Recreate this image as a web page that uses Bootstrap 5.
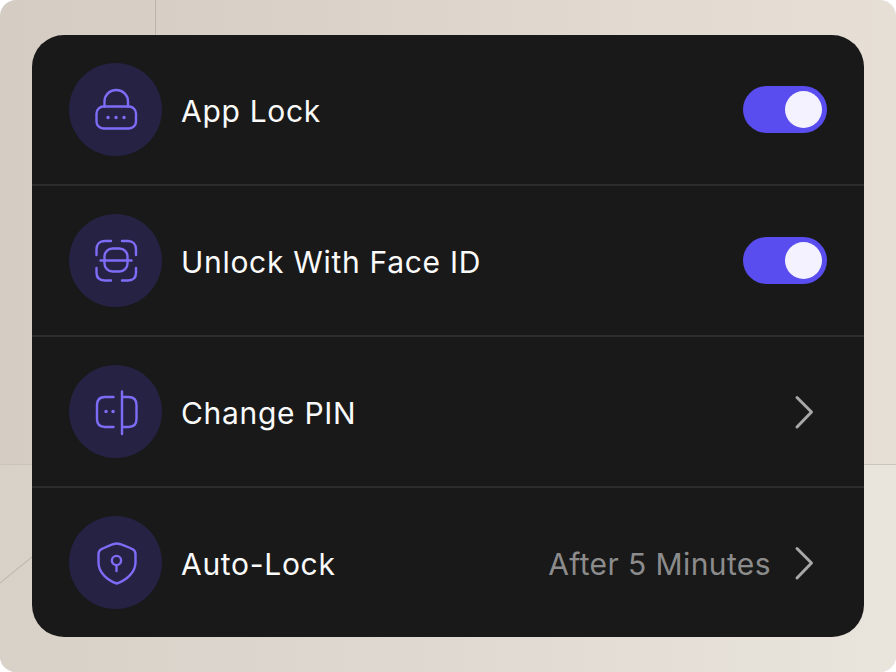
<!DOCTYPE html>
<html lang="en">
<head>
<meta charset="utf-8">
<title>Security settings</title>
<link href="https://cdn.jsdelivr.net/npm/bootstrap@5.3.0/dist/css/bootstrap.min.css" rel="stylesheet">
<style>
html,body{margin:0;width:896px;height:672px;overflow:hidden;background:#fff}
.scene{width:896px;height:672px;border-radius:16px;overflow:hidden;position:relative;padding:35px 32px;
 background:linear-gradient(90deg,#d5cdc3 0%,#d9d1c7 30%,#e2dad0 70%,#e6dfd6 100%)}
.scene-lower{position:absolute;left:0;right:0;top:465px;bottom:0;background:linear-gradient(90deg,#d8d1c8 0%,#dfd9d1 50%,#e9e4dc 100%)}
.scene-lines{position:absolute;inset:0}
.panel{position:relative;width:832px;height:602px;background:#191919;border-radius:32px;overflow:hidden;font-family:"Inter","Liberation Sans",sans-serif}
.setting{height:151px;padding:0 37px;border-bottom:2px solid #2d2d2d;color:#fff}
.setting:last-child{border-bottom:0;height:149px}
.disc{width:93px;height:93px;border-radius:50%;background:#252244;flex:none;margin-right:19px}
.disc svg{width:48px;height:48px;fill:none;stroke:#7d6cf5;stroke-width:2.4;stroke-linecap:round;stroke-linejoin:round}
.title{font-size:30px;font-weight:400;letter-spacing:.7px;line-height:1;padding-top:3px;color:#fafafa}
.detail{font-size:30px;color:#8c8c8c;letter-spacing:.4px;line-height:1;padding-top:3px;margin-right:21px}
.toggle{width:84px;height:47px;border-radius:24px;background:#5a4df0;position:relative;display:block}
.toggle::after{content:"";position:absolute;right:5px;top:5px;width:37px;height:37px;border-radius:50%;background:#f3f2fe}
.chev{width:24px;height:36px;margin-right:11px;fill:none;stroke:#a8a8a8;stroke-width:3;stroke-linecap:round;stroke-linejoin:round}
</style>
</head>
<body>
<div class="scene">
  <div class="scene-lower"></div>
  <svg class="scene-lines" viewBox="0 0 896 672" width="896" height="672" fill="none" stroke="#bdb5aa" stroke-width="1">
    <path d="M155.500 0V35"/>
    <path d="M0 464.500H896" stroke="#cbc4b9"/>
    <path d="M0 583L32 557" stroke="#b8b0a6"/>
  </svg>
  <div class="panel">
    <div class="setting d-flex align-items-center">
      <div class="disc d-flex align-items-center justify-content-center">
        <svg viewBox="0 0 48 48"><rect x="4.500" y="20.500" width="39.500" height="22" rx="7"/><path d="M12.500 20.500v-5C12.500 9 17.500 4 24.200 4S36 9 36 15.500v5"/><path d="M16 31.500h.1M24 31.500h.1M32 31.500h.1" stroke-width="3.400"/></svg>
      </div>
      <span class="title flex-grow-1">App Lock</span>
      <span class="toggle"></span>
    </div>
    <div class="setting d-flex align-items-center">
      <div class="disc d-flex align-items-center justify-content-center">
        <svg viewBox="0 0 48 48"><path d="M4.500 18v-5.500c0-5 3-8.500 8-8.500H19M30 4h6c5 0 8 3.500 8 8.500V18M44 31v4.500c0 5-3 8-8 8h-6M19 43.500h-6.500c-5 0-8-3-8-8V31"/><rect x="12.500" y="11.500" width="23" height="23" rx="8"/><path d="M8.500 23.500h31"/></svg>
      </div>
      <span class="title flex-grow-1">Unlock With Face ID</span>
      <span class="toggle"></span>
    </div>
    <div class="setting d-flex align-items-center">
      <div class="disc d-flex align-items-center justify-content-center">
        <svg viewBox="0 0 48 48"><path d="M21.500 9H13c-5 0-8 3-8 8v14c0 5 3 8 8 8h8.500"/><path d="M30 3.500v42.500M30 9h6.500c5 0 8 3 8 8v14c0 5-3 8-8 8H30"/><path d="M14 23.500h.1M21 23.500h.1" stroke-width="3.400"/></svg>
      </div>
      <span class="title flex-grow-1">Change PIN</span>
      <svg class="chev" viewBox="0 0 24 36"><path d="M5 3.500L19.500 18 5 33"/></svg>
    </div>
    <div class="setting d-flex align-items-center">
      <div class="disc d-flex align-items-center justify-content-center">
        <svg viewBox="0 0 48 48"><path d="M24.700 4.500c3 0 12 3.500 16 5.800 2 1.100 2.800 2.500 2.800 5v8.200c0 10-9.500 18-18.800 21C15.500 41.500 6.500 33.500 6.500 23.500v-8.200c0-2.500.8-3.900 2.800-5 4-2.300 12.400-5.800 15.400-5.800z"/><circle cx="24.500" cy="21.500" r="4.600"/><path d="M24.500 26.100v6"/></svg>
      </div>
      <span class="title flex-grow-1">Auto-Lock</span>
      <span class="detail">After 5 Minutes</span>
      <svg class="chev" viewBox="0 0 24 36"><path d="M5 3.500L19.500 18 5 33"/></svg>
    </div>
  </div>
</div>
</body>
</html>
